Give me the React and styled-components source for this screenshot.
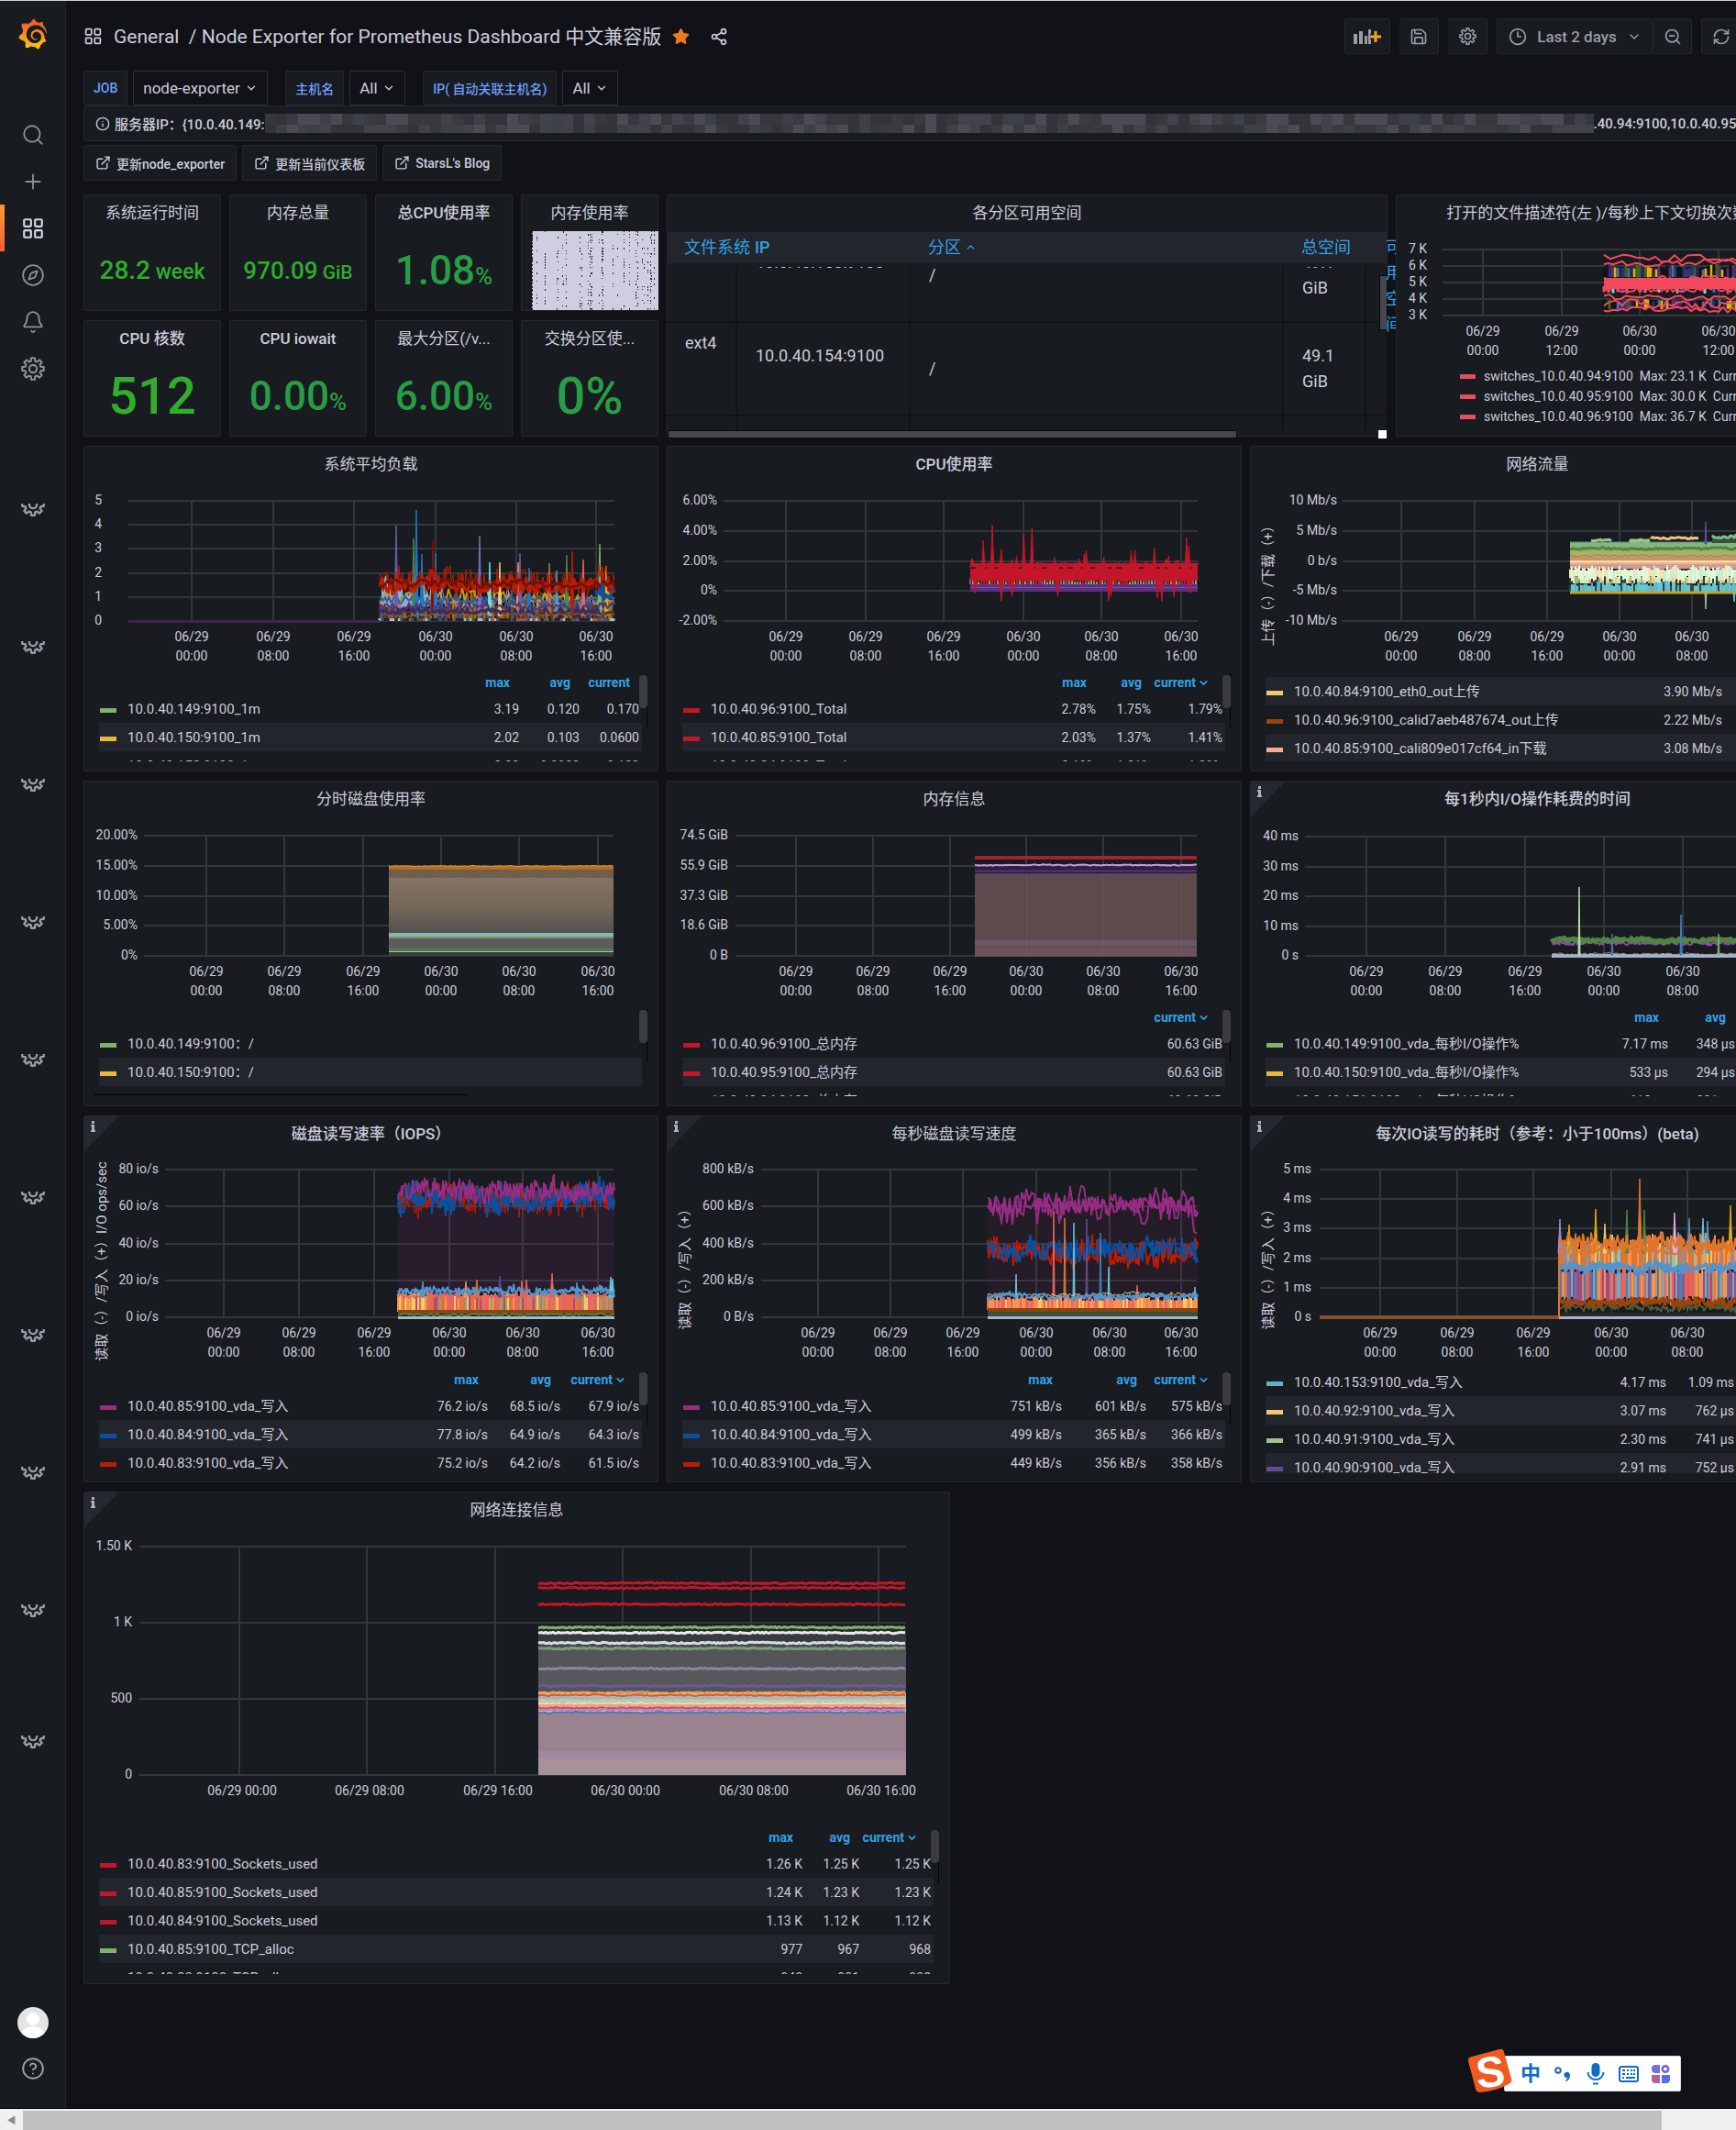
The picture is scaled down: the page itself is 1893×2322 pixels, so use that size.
import React, { useLayoutEffect, useRef } from "react";
import styled, { createGlobalStyle } from "styled-components";
import {
  Search, Plus, LayoutGrid, Compass, Bell, Share2, Save, Clock3,
  ZoomOut, RefreshCw, ChevronDown, ChevronUp, ExternalLink, Info, CircleHelp, Monitor,
} from "lucide-react";
import { SiGrafana } from "react-icons/si";
import { FaStar } from "react-icons/fa";

const FONT = `Roboto, "Noto Sans CJK SC", "Liberation Sans", sans-serif`;

const Global = createGlobalStyle`
  * { box-sizing: border-box; }
  body {
    margin: 0;
    background: #111217;
    color: #ccccdc;
    font-family: ${FONT};
    font-size: 14px;
    overflow-x: hidden;
  }
  button, select { font-family: inherit; margin: 0; }
  a { color: inherit; text-decoration: none; }
`;

/* ---------- page frame ---------- */

const Page = styled.div`
  position: relative;
  display: flex;
  flex-direction: column;
  min-height: 100vh;
  overflow: hidden;
  border-top: 1px solid #c9d3d3;
`;

const Body = styled.div`
  flex: 1;
  display: flex;
`;

const Sidebar = styled.nav`
  flex: 0 0 72px;
  display: flex;
  flex-direction: column;
  align-items: center;
  background: #181b1f;
  border-right: 1px solid #24272c;
  padding: 18px 0 30px;
`;

const LogoLink = styled.a`
  display: flex;
  height: 36px;
  margin-bottom: 66px;
  svg.mark { width: 33px; height: 36px; }
  svg.mark path { fill: url(#grafana-flame); }
`;

const NavLink = styled.a`
  width: 100%;
  height: 51px;
  display: flex;
  align-items: center;
  justify-content: center;
  border-left: 5px solid transparent;
  border-right: 5px solid transparent;
  border-image: ${(p) => (p.$active ? "linear-gradient(#ff9830, #f55f3e) 1 / 0 0 0 5px" : "none")};
  color: ${(p) => (p.$active ? "#d5d5e2" : "#8e9098")};
`;

const HalfGear = styled.a`
  display: flex;
  align-items: flex-end;
  flex: 0 0 14px;
  height: 14px;
  overflow: hidden;
  margin-top: ${(p) => p.$gap}px;
  color: #9a9ca5;
  svg { flex: none; }
`;

const SidebarFoot = styled.div`
  margin-top: auto;
  display: flex;
  flex-direction: column;
  align-items: center;
  gap: 20px;
  color: #9a9ca5;
`;

const Avatar = styled.span`
  width: 34px;
  height: 34px;
  border-radius: 50%;
  overflow: hidden;
  background: #e4e4e4;
  display: block;
`;

const Main = styled.main`
  flex: 1 0 0;
  min-width: 1937px;
  padding: 19px 19px 0;
  display: flex;
  flex-direction: column;
`;

/* ---------- top bar ---------- */

const TopBar = styled.header`
  height: 39px;
  display: flex;
  align-items: center;
  margin-bottom: 18px;
`;

const Heading = styled.h1`
  margin: 0 auto 0 0;
  display: flex;
  align-items: center;
  gap: 12px;
  font-size: 21px;
  font-weight: 400;
  line-height: 30px;
  white-space: pre;
`;

const IconButton = styled.button`
  display: flex;
  padding: 0;
  border: 0;
  background: none;
  color: ${(p) => p.$color || "#ccccdc"};
  margin-left: ${(p) => p.$gap || 0}px;
`;

const Tools = styled.div`
  display: flex;
  gap: 10px;
`;

const ToolGroup = styled.div`
  display: flex;
`;

const ToolButton = styled.button`
  height: 39px;
  width: ${(p) => p.$w}px;
  display: flex;
  align-items: center;
  justify-content: center;
  gap: 11px;
  padding: 0;
  background: #181b1f;
  border: 1px solid #25282d;
  border-radius: 2px;
  color: #9a9ca6;
  font-size: 17px;
  font-weight: 500;
  & + & { border-left-width: 0; }
`;

/* ---------- submenu ---------- */

const Variables = styled.div`
  display: flex;
  gap: 19px;
`;

const Variable = styled.div`
  display: flex;
  gap: 6px;
`;

const VarLabel = styled.label`
  height: 38px;
  padding: 0 10px;
  display: flex;
  align-items: center;
  background: #181b1f;
  border: 1px solid #24272c;
  border-radius: 2px;
  color: #6e9fff;
  font-size: 14px;
  font-weight: 500;
`;

const SelectBox = styled.span`
  position: relative;
  display: flex;
  svg { position: absolute; right: 11px; top: 12px; pointer-events: none; }
`;

const Select = styled.select`
  appearance: none;
  height: 38px;
  padding: 0 29px 0 10px;
  background: #111217;
  border: 1px solid #2c2f35;
  border-radius: 2px;
  color: #ccccdc;
  font-size: 17px;
`;

const InfoBar = styled.button`
  height: 39px;
  width: 100%;
  display: flex;
  align-items: center;
  padding: 0 12px;
  background: #181b1f;
  border: 1px solid #24272c;
  border-radius: 2px;
  color: #ccccdc;
  font-size: 15px;
  font-weight: 500;
  white-space: nowrap;
  overflow: hidden;
  margin-bottom: 4px;
  > svg:first-child { margin-right: 5px; }
  svg { flex: none; }
`;

const Links = styled.div`
  display: flex;
  gap: 6px;
  margin-bottom: 15px;
`;

const OutLink = styled.a`
  height: 39px;
  display: flex;
  align-items: center;
  gap: 6px;
  padding: 0 12px;
  background: #181b1f;
  border: 1px solid #24272c;
  border-radius: 2px;
  font-size: 14px;
  font-weight: 500;
`;

/* ---------- panels ---------- */

const Grid = styled.div`
  display: grid;
  grid-template-columns: repeat(24, minmax(0, 1fr));
  grid-template-rows: 127px 127px 355px 355px 400px 537px;
  gap: 10px 9px;
  padding-bottom: 135px;
`;

const PanelBox = styled.section`
  position: relative;
  min-width: 0;
  grid-column: span ${(p) => p.$cols};
  grid-row: span ${(p) => p.$rows || 1};
  background: #181b1f;
  box-shadow: inset 0 0 0 1px #24272c;
  border-radius: 2px;
  display: flex;
  flex-direction: column;
`;

const PanelTitle = styled.h2`
  margin: 0;
  flex: 0 0 38px;
  min-height: 0;
  text-align: center;
  font-size: 17px;
  font-weight: ${(p) => (p.$latin ? 500 : 400)};
  line-height: 40px;
  white-space: nowrap;
`;

const Corner = styled.svg`
  position: absolute;
  left: 1px;
  top: 1px;
`;

const StatBody = styled.div`
  flex: 1;
  display: flex;
  align-items: baseline;
  justify-content: center;
  align-content: center;
  flex-wrap: wrap;
  font-weight: 500;
  line-height: 1;
  color: ${(p) => p.$color};
  font-size: ${(p) => p.$size}px;
  white-space: pre;
`;

const Unit = styled.span`
  font-size: ${(p) => p.$size}px;
`;

const Block = styled.svg`
  display: block;
  width: 100%;
  height: auto;
`;

const NoiseWrap = styled.div`
  padding: 2px 0 0 12px;
`;

/* ---------- legend ---------- */

const LegendBox = styled.div`
  position: relative;
  height: ${(p) => p.$h}px;
  overflow: hidden;
  padding: 0 18px 0 17px;
`;

const LegendTable = styled.table`
  width: 100%;
  table-layout: fixed;
  border-collapse: collapse;
  white-space: nowrap;
`;

const LegendHead = styled.th`
  height: 26px;
  padding: 0 ${(p) => (p.$sorted ? 17 : 13)}px 0 0;
  text-align: right;
  color: #33a2e5;
  font-size: 14px;
  font-weight: 700;
  svg { margin: 0 0 -2px 2px; }
`;

const LegendRow = styled.tr`
  height: 31px;
  background: ${(p) => (p.$striped ? "#22252b" : "transparent")};
`;

const LegendName = styled.td`
  padding: 0 0 0 31px;
  font-size: 15px;
  line-height: 20px;
  background: linear-gradient(${(p) => p.$c}, ${(p) => p.$c}) 1px 15px / 18px 5px no-repeat;
`;

const LegendValue = styled.td`
  padding: 0 3px 0 0;
  text-align: right;
  font-size: 14px;
`;

const Thumb = styled.span`
  position: absolute;
  right: 12px;
  top: 5px;
  width: 9px;
  height: 36px;
  border-radius: 4px;
  background: #3a3c41;
`;

const Track = styled.span`
  position: absolute;
  right: 12px;
  top: 3px;
  width: 1px;
  height: 60px;
  background: #050507;
`;

const BottomTrack = styled.span`
  position: absolute;
  left: 12px;
  bottom: 0;
  width: 65%;
  height: 1px;
  background: #000;
`;

/* ---------- partition table ---------- */

const PartTable = styled.table`
  display: block;
  margin-top: 3px;
  font-size: 18px;
  line-height: 28px;
  tr {
    display: grid;
    grid-template-columns: 77px 189px 1fr 90px 23px;
  }
  thead { display: block; background: #22252b; height: 34px; overflow: hidden; }
  tbody { display: block; height: 183px; margin-top: 4px; overflow: hidden; }
`;

const PartHead = styled.th`
  padding: 3px 0 0 19px;
  text-align: left;
  color: #33a2e5;
  font-weight: ${(p) => (p.$latin ? 500 : 400)};
  white-space: nowrap;
`;

const PartCell = styled.td`
  height: 102px;
  padding: 0 0 ${(p) => p.$lift || 0}px 20px;
  display: flex;
  align-items: center;
  border-bottom: 2px solid #121418;
  border-right: 2px solid #121418;
`;

const SpillHead = styled.span`
  position: absolute;
  left: calc(100% - 2px);
  top: 44px;
  width: 11px;
  overflow: hidden;
  color: #33a2e5;
  font-size: 18px;
  line-height: 28px;
  span { display: block; width: 18px; }
`;

const VThumb = styled.span`
  position: absolute;
  right: 0;
  top: 88px;
  width: 9px;
  height: 60px;
  background: #46474e;
  border: 1px solid #0a0a0c;
`;

const HThumb = styled.span`
  position: absolute;
  left: 1px;
  bottom: -2px;
  width: 79%;
  height: 9px;
  background: #46474e;
  border: 1px solid #0a0a0c;
`;

const ScrollCorner = styled.span`
  position: absolute;
  right: 1px;
  bottom: -2px;
  width: 9px;
  height: 9px;
  background: #fff;
`;

const InlineLegend = styled.ul`
  list-style: none;
  margin: 0;
  padding: 0 0 0 70px;
  font-size: 14px;
  li {
    height: 22px;
    display: flex;
    align-items: center;
    gap: 9px;
    white-space: pre;
  }
`;

const Swatch = styled.span`
  width: 17px;
  height: 5px;
  background: ${(p) => p.$c};
`;

/* ---------- window scrollbar and input method bar ---------- */

const HScroll = styled.div`
  flex: 0 0 24px;
  display: flex;
  border-top: 1px solid #000;
  background: #f0f0f0;
`;

const ScrollArrow = styled.button`
  flex: 0 0 25px;
  padding: 0;
  border: 0;
  background: #f0f0f0;
  color: #8a8a8a;
  font-size: 10px;
`;

const ScrollThumb = styled.div`
  margin-top: 2px;
  width: 94.4%;
  background: #c1c1c1;
`;

const ScrollRest = styled.div`
  flex: 0 0 81px;
`;

const ImeBar = styled.div`
  position: absolute;
  right: 60px;
  bottom: 42px;
  height: 39px;
  width: 193px;
  display: flex;
  align-items: center;
  justify-content: space-between;
  padding: 0 9px 0 17px;
  background: #fff;
  border: 1px solid #d8dbe0;
  border-radius: 2px;
`;

const ImeLogo = styled.svg`
  position: absolute;
  left: -41px;
  top: -9px;
`;

const ImeButton = styled.button`
  display: flex;
  width: 22px;
  padding: 0;
  border: 0;
  background: none;
  color: #0f6cc0;
  font-size: 22px;
  font-weight: 700;
  line-height: 24px;
`;

/* ---------- gear drawing: eight teeth round a ring ---------- */

const GEAR = (() => {
  const pts = [];
  for (let k = 0; k < 8; k++) {
    [[-15, 8], [-9, 11], [9, 11], [15, 8]].forEach(([a, rad]) => {
      const t = ((k * 45 + a) * Math.PI) / 180;
      pts.push(`${(12 + rad * Math.sin(t)).toFixed(2)} ${(12 - rad * Math.cos(t)).toFixed(2)}`);
    });
  }
  return `M${pts.join("L")}Z`;
})();

const Gear = ({ size = 25, sw = 1.9 }) => (
  <svg width={size} height={size} viewBox="0 0 24 24" fill="none" stroke="currentColor" strokeWidth={sw} strokeLinejoin="round" aria-hidden="true">
    <path d={GEAR} />
    <circle cx="12" cy="12" r="3.8" />
  </svg>
);

/* ---------- series helpers ---------- */

function rng(seed) {
  let s = seed * 7919 + 17;
  return () => {
    s = (s * 1103515245 + 12345) % 2147483648;
    return s / 2147483648;
  };
}

function wave({ seed, x0, x1, y, amp, step = 2, up = 0, chance = 0 }) {
  const r = rng(seed);
  let d = "";
  let drift = 0;
  for (let x = x0; x <= x1; x += step) {
    drift = drift * 0.85 + (r() - 0.5) * amp * 0.5;
    let v = y + drift + (r() - 0.5) * 2 * amp;
    if (r() < chance) v -= up * r();
    d += `${d ? "L" : "M"}${x} ${v.toFixed(1)}`;
  }
  return d;
}

const Wave = ({ c, w = 2, ...p }) => (
  <path d={wave(p)} fill="none" stroke={c} strokeWidth={w} strokeLinejoin="round" />
);

function Strips({ seed, x0, x1, top, bottom, jt = 0, jb = 0, colors, step = 2, w = 2, fill = 1 }) {
  const r = rng(seed);
  const paths = colors.map(() => "");
  for (let x = x0; x < x1; x += step) {
    const i = Math.floor(r() * colors.length);
    const a = top + (r() - 0.5) * 2 * jt;
    const b = bottom + (r() - 0.5) * 2 * jb;
    if (r() <= fill) paths[i] += `M${x} ${a.toFixed(1)}V${b.toFixed(1)}`;
  }
  return paths.map((d, i) => <path key={i} d={d} stroke={colors[i]} strokeWidth={w} fill="none" />);
}

const Spikes = ({ list, base, w = 2 }) =>
  list.map(([x, y, c], i) => (
    <path key={i} d={`M${x - w} ${base}L${x} ${y}L${x + w} ${base}Z`} fill={c} stroke={c} strokeWidth="1" />
  ));

const Band = ({ x0, x1, y0, y1, c, o = 1 }) => (
  <rect x={x0} y={y0} width={x1 - x0} height={y1 - y0} fill={c} opacity={o} />
);

const DAYS = [
  ["06/29", "00:00"], ["06/29", "08:00"], ["06/29", "16:00"],
  ["06/30", "00:00"], ["06/30", "08:00"], ["06/30", "16:00"],
];

function Chart({ width = 627, end, y0, y1, labels, labelX, gx0, gx1 = 579, ticks, days = DAYS, oneLine, axis, axisY, children }) {
  const n = labels.length - 1;
  const ys = labels.map((_, i) => Math.round(y0 + ((y1 - y0) * i) / n));
  return (
    <Block viewBox={`0 38 ${width} ${end - 38}`} role="img">
      <g fill="#b4becd" opacity="0.17">
        {ys.map((y) => <rect key={y} x={gx0} y={y - 1} width={gx1 - gx0} height="2" />)}
        {ticks.map((x) => <rect key={x} x={x - 1} y={y0} width="2" height={y1 - y0} />)}
      </g>
      {children}
      <g fill="#ccccdc" fontSize="14" fontFamily={FONT}>
        {labels.map((t, i) => <text key={t} x={labelX} y={ys[i] + 4} textAnchor="end">{t}</text>)}
        {ticks.map((x, i) =>
          oneLine ? (
            <text key={x} x={x + 3} y={y1 + 22} textAnchor="middle">{days[i].join(" ")}</text>
          ) : (
            <React.Fragment key={x}>
              <text x={x} y={y1 + 22} textAnchor="middle">{days[i][0]}</text>
              <text x={x} y={y1 + 43} textAnchor="middle">{days[i][1]}</text>
            </React.Fragment>
          )
        )}
        {axis && (
          <text transform={`translate(25 ${axisY}) rotate(-90)`} textAnchor="middle" fontSize="15">{axis}</text>
        )}
      </g>
    </Block>
  );
}

function Legend({ h, heads, cols, rows, sorted, stripe = 1, scroll, under }) {
  return (
    <LegendBox $h={h}>
      <LegendTable>
        <colgroup>
          <col />
          {cols.map((w, i) => <col key={i} style={{ width: w }} />)}
        </colgroup>
        {heads && (
          <thead>
            <tr>
              <LegendHead aria-label="series" />
              {heads.map((t, i) => {
                const last = sorted && i === heads.length - 1;
                return (
                  <LegendHead key={i} $sorted={last}>
                    {t}{last && <ChevronDown size={13} strokeWidth={3} />}
                  </LegendHead>
                );
              })}
            </tr>
          </thead>
        )}
        <tbody>
          {rows.map(([c, name, ...vals], i) => (
            <LegendRow key={name} $striped={i % 2 === stripe}>
              <LegendName $c={c}>{name}</LegendName>
              {vals.map((v, j) => <LegendValue key={j}>{v}</LegendValue>)}
            </LegendRow>
          ))}
        </tbody>
      </LegendTable>
      {scroll && <><Track /><Thumb /></>}
      {under && <BottomTrack />}
    </LegendBox>
  );
}

function Panel({ title, cols, rows, info, children }) {
  return (
    <PanelBox $cols={cols} $rows={rows}>
      {info && (
        <Corner width="37" height="38" viewBox="0 0 37 38" aria-hidden="true">
          <path d="M0 0H37L0 38Z" fill="#25282e" />
          <path d="M8 5h3v3H8zM7 9h4v6h1v2H7v-2h1v-4H7z" fill="#b0b1bd" />
        </Corner>
      )}
      <PanelTitle $latin={/[A-Z]|beta/.test(title)}>{title}</PanelTitle>
      {children}
    </PanelBox>
  );
}

function Stat({ title, value, unit, size, unitSize, color = "#299c46" }) {
  return (
    <Panel title={title} cols={2}>
      <StatBody $size={size} $color={color}>
        <span>{value}{unit && <Unit $size={unitSize}>{unit}</Unit>}</span>
      </StatBody>
    </Panel>
  );
}

function NoisePanel() {
  const r = rng(5);
  let d = "";
  for (let i = 0; i < 34; i++) {
    const x = Math.floor(r() * 137);
    const dense = r();
    for (let y = 0; y < 86; y += 3) if (r() < dense * 0.6) d += `M${x} ${y}h1v${1 + Math.floor(r() * 2)}h-1z`;
  }
  for (let y = 0; y < 86; y += 4) d += `M0 ${y}h1v2h-1z`;
  return (
    <Panel title="内存使用率" cols={2}>
      <NoiseWrap>
        <Block viewBox="0 0 138 86" role="img">
          <rect width="138" height="86" fill="#cfcde0" />
          <path d={d} fill="#2a2b33" />
        </Block>
      </NoiseWrap>
    </Panel>
  );
}

function Mosaic() {
  const tones = ["#3a3b41", "#42434a", "#33343a", "#4a4b53", "#3e4048", "#37383d"];
  const r = rng(11);
  const cells = [];
  for (let x = 0; x < 1451; x += 12) {
    cells.push(<rect key={x} x={x} y="0" width="12" height="12" fill={tones[Math.floor(r() * 6)]} />);
    cells.push(<rect key={`b${x}`} x={x} y="12" width="12" height="9" fill={tones[Math.floor(r() * 6)]} />);
  }
  return <svg width="1449" height="21" aria-hidden="true">{cells}</svg>;
}

function Partitions() {
  const body = useRef(null);
  useLayoutEffect(() => { body.current.scrollTop = 41; }, []);
  return (
    <Panel title="各分区可用空间" cols={10} rows={2}>
      <PartTable>
        <thead>
          <tr>
            <PartHead>文件系统</PartHead>
            <PartHead $latin>IP</PartHead>
            <PartHead>分区 <ChevronUp size={13} strokeWidth={2.6} /></PartHead>
            <PartHead>总空间</PartHead>
            <PartHead aria-label="可用空间" />
          </tr>
        </thead>
        <tbody ref={body}>
          {[["", "10.0.40.153:9100"], ["ext4", "10.0.40.154:9100"]].map(([fs, ip]) => (
            <tr key={ip}>
              <PartCell $lift={56}>{fs}</PartCell>
              <PartCell $lift={28}>{ip}</PartCell>
              <PartCell>/</PartCell>
              <PartCell>49.1<br />GiB</PartCell>
              <PartCell />
            </tr>
          ))}
          <tr><PartCell /><PartCell /><PartCell /><PartCell /><PartCell /></tr>
        </tbody>
      </PartTable>
      <VThumb /><HThumb /><ScrollCorner />
      <SpillHead aria-hidden="true"><span>可</span><span>用</span><span>空</span><span>间</span></SpillHead>
    </Panel>
  );
}

function Switches() {
  const x = { x0: 227, x1: 440 };
  const mix = ["#e0b400", "#1f3a7a", "#111217", "#4b6f9e", "#5f2a78", "#111217", "#37672d", "#111217", "#3a2050"];
  return (
    <Panel title="打开的文件描述符(左 )/每秒上下文切换次数(右)" cols={6} rows={2}>
      <Chart width={468} end={187} y0={60} y1={132} labels={["7 K", "6 K", "5 K", "4 K", "3 K"]} labelX={34}
        gx0={51} gx1={440} ticks={[95, 181, 266, 352]}
        days={[["06/29", "00:00"], ["06/29", "12:00"], ["06/30", "00:00"], ["06/30", "12:00"]]}>
        <Strips seed={2} {...x} top={79} bottom={90} jt={3} colors={mix} step={3} w={3} />
        <Strips seed={3} {...x} top={116} bottom={124} jt={2} jb={2} colors={mix} step={3} w={3} />
        <Strips seed={4} {...x} top={100} bottom={107} jb={2} colors={["#70dbed", "#1f78c1", "#f2495c"]} step={5} w={3} fill={0.6} />
        <Band {...x} y0={91} y1={103} c="#f2495c" />
        <Wave seed={5} {...x} y={69} amp={4} step={7} c="#f2495c" />
        <Wave seed={6} {...x} y={75} amp={3} step={5} c="#f2495c" />
        <Wave seed={7} {...x} y={92} amp={3} step={3} c="#f2495c" />
        <Wave seed={8} {...x} y={103} amp={3} step={3} c="#f2495c" />
        <Wave seed={9} {...x} y={112} amp={3} step={6} c="#f2495c" />
        <Wave seed={10} {...x} y={119} amp={4} step={4} c="#f2495c" />
        <Wave seed={12} {...x} y={125} amp={3} step={5} c="#f2495c" />
      </Chart>
      <InlineLegend>
        {[["94", "23.1"], ["95", "30.0"], ["96", "36.7"]].map(([ip, v]) => (
          <li key={ip}><Swatch $c="#e24d5f" />{`switches_10.0.40.${ip}:9100  Max: ${v} K  Current: 5.2 K`}</li>
        ))}
      </InlineLegend>
    </Panel>
  );
}

function Load() {
  const x = { x0: 323, x1: 579 };
  return (
    <Panel title="系统平均负载" cols={8}>
      <Chart end={245} y0={60} y1={191} labels={["5", "4", "3", "2", "1", "0"]} labelX={20} gx0={49}
        ticks={[118, 207, 295, 384, 472, 559]}>
        <Strips seed={21} {...x} top={168} bottom={190} jt={12} colors={["#4a2f73", "#58140c", "#967302", "#2f5f94", "#6a3a18", "#8f3b2a", "#3f2b5b"]} />
        <path d={`${wave({ seed: 22, x0: 325, x1: 384, y: 154, amp: 14 })}V175H325Z`} fill="#82b5d8" />
        <Wave seed={23} {...x} y={166} amp={9} step={3} w={2} c="#c99a14" />
        <Wave seed={33} {...x} y={172} amp={7} step={3} w={1} c="#6a9c86" />
        <Wave seed={24} {...x} y={172} amp={5} up={25} chance={0.06} c="#c58ad0" w={1} />
        <Wave seed={25} {...x} y={168} amp={5} c="#2f5fa0" />
        <Spikes base={185} list={[
          [341, 87, "#705da0"], [360, 101, "#508642"], [363, 70, "#1f78c1"], [369, 118, "#1f78c1"], [381, 102, "#890f02"],
          [384, 117, "#1f78c1"], [432, 98, "#806eb7"], [443, 127, "#70dbed"], [454, 127, "#f2c96d"], [474, 127, "#f9934e"],
          [476, 117, "#705da0"], [486, 133, "#1f78c1"], [508, 128, "#ba6f43"], [516, 136, "#5195ce"], [527, 119, "#508642"],
          [533, 115, "#bf1b00"], [545, 124, "#ea6460"], [563, 107, "#7eb26d"], [570, 131, "#e5ac0e"],
        ]} />
        <Wave seed={26} {...x} y={148} amp={13} up={18} chance={0.08} step={1} w={1} c="#bf1b00" />
        <Wave seed={34} {...x} y={152} amp={8} c="#bf1b00" w={3} />
        <Wave seed={27} {...x} y={150} amp={4} step={4} c="#7a1008" w={3} />
        <Wave seed={28} x0={558} x1={579} y={159} amp={8} c="#0a50a1" w={3} />
        <Wave seed={29} {...x} y={175} amp={4} c="#4b3a78" w={2} />
        <Wave seed={30} {...x} y={181} amp={3} c="#3f2b5b" w={3} />
        <Wave seed={31} {...x} y={184} amp={2} c="#967302" w={1} />
        <Strips seed={32} {...x} top={188} bottom={191} colors={["#b8b8b8", "#8f5a5a", "#1f2430", "#3a5866", "#1f2430"]} step={3} w={3} />
        <Band x0={49} x1={323} y0={190} y1={193} c="#3f2450" />
      </Chart>
      <Legend h={99} heads={["max", "avg", "current"]} cols={[80, 66, 65]} scroll rows={[
        ["#7eb26d", "10.0.40.149:9100_1m", "3.19", "0.120", "0.170"],
        ["#eab839", "10.0.40.150:9100_1m", "2.02", "0.103", "0.0600"],
        ["transparent", "10.0.40.152:9100_1m", "2.33", "0.0932", "0.130"],
      ]} />
    </Panel>
  );
}

function Cpu() {
  const x = { x0: 331, x1: 579 };
  const red = "#c4162a";
  const up = [[863, 328], [887, 278], [911, 355], [940, 390], [952, 377], [971, 308], [993, 285], [1053, 382], [1118, 388], [1133, 370], [1138, 360], [1185, 382], [1258, 360], [1268, 357], [1320, 353], [1358, 378], [1406, 318], [1412, 345]];
  const down = [[841, 500], [911, 527], [940, 510], [1062, 512], [1198, 525], [1204, 510], [1328, 515], [1340, 527], [1372, 512], [1416, 500]];
  return (
    <Panel title="CPU使用率" cols={8}>
      <Chart end={245} y0={60} y1={191} labels={["6.00%", "4.00%", "2.00%", "0%", "-2.00%"]} labelX={55} gx0={62}
        ticks={[130, 217, 302, 389, 474, 561]}>
        <Band {...x} y0={150} y1={159} c="#5b2f80" />
        <Band {...x} y0={154} y1={155} c="#7f4ca5" />
        <Strips seed={41} {...x} top={146} bottom={151} jt={2} colors={["#7eb26d", "#8f8f5c", "#705da0", "#c4162a"]} step={3} />
        <Band {...x} y0={128} y1={147} c={red} />
        <Wave seed={42} {...x} y={131} amp={3} up={6} chance={0.1} c={red} />
        <Wave seed={43} {...x} y={145} amp={3} c={red} />
        <path d="M331 133H579" stroke="#5a0f1c" strokeWidth="2" strokeDasharray="6 9 3 7 5 14 4 5" />
        <path d="M331 129H579" stroke={red} strokeWidth="2" />
        <Spikes base={140} w={2} list={up.map(([a, b]) => [a / 2.45 - 7, b / 3 - 6, red])} />
        <Spikes base={145} w={2} list={down.map(([a, b]) => [a / 2.45 - 7, b / 3 - 6, red])} />
      </Chart>
      <Legend h={99} heads={["max", "avg", "current"]} cols={[90, 60, 78]} sorted scroll rows={[
        ["#c4162a", "10.0.40.96:9100_Total", "2.78%", "1.75%", "1.79%"],
        ["#c4162a", "10.0.40.85:9100_Total", "2.03%", "1.37%", "1.41%"],
        ["transparent", "10.0.40.84:9100_Total", "2.18%", "1.31%", "1.38%"],
      ]} />
    </Panel>
  );
}

function Network() {
  const x = { x0: 349, x1: 579 };
  return (
    <Panel title="网络流量" cols={8}>
      <Chart end={252} y0={60} y1={191} labels={["10 Mb/s", "5 Mb/s", "0 b/s", "-5 Mb/s", "-10 Mb/s"]} labelX={95} gx0={101}
        ticks={[165, 245, 324, 403, 482, 561]} axis="上传（-）/下载（+）" axisY={149}>
        <Band {...x} y0={105} y1={122} c="#86b67c" />
        <path d="M349 105H579" stroke="#4a8f8c" strokeWidth="1" />
        <Wave seed={51} x0={372} x1={394} y={103} amp={1} c="#9ac48a" w={3} />
        <Wave seed={52} x0={414} x1={437} y={103} amp={1} c="#9ac48a" w={4} />
        <Wave seed={53} x0={437} x1={490} y={101} amp={1} c="#f2c07a" w={3} />
        <Band x0={504} x1={579} y0={100} y1={106} c="#37513a" />
        <Wave seed={54} x0={504} x1={579} y={99} amp={2} c="#7fc08d" w={3} />
        <Wave seed={55} {...x} y={112} amp={1} c="#508642" w={3} />
        <Band {...x} y0={115} y1={121} c="#b3ae5e" />
        <Wave seed={56} {...x} y={120} amp={1} c="#7d8b7a" w={1} />
        <Band {...x} y0={121} y1={125} c="#cf9062" />
        <Band {...x} y0={125} y1={127} c="#f5dfa8" />
        <Band {...x} y0={127} y1={129} c="#f2b58a" />
        <Band {...x} y0={129} y1={134} c="#cf9a94" />
        <Strips seed={60} {...x} top={143} bottom={150} colors={["#2c3b33", "#a9b875", "#cdeccd", "#f2c96d"]} />
        <Strips seed={57} {...x} top={133} bottom={145} jt={3} jb={3} colors={["#e0f9d7", "#f9e2b0", "#cdeccd", "#e6f3d8"]} />
        <Strips seed={59} {...x} top={150} bottom={159} jt={3} colors={["#65c5db", "#5fc4b8", "#64b0c8", "#65c5db", "#65c5db", "#5fc4b8", "#2c4b43"]} />
        <path d="M349 160H579" stroke="#c9a227" strokeWidth="3" />
        <Spikes base={107} w={1} list={[[497, 83, "#614d93"]]} />
        <Spikes base={160} w={1} list={[[497, 178, "#9ac48a"], [528, 170, "#65c5db"]]} />
      </Chart>
      <Legend h={92} cols={[110, 50, 41]} stripe={0} rows={[
        ["#f2c96d", "10.0.40.84:9100_eth0_out上传", "3.90 Mb/s", "", ""],
        ["#99440a", "10.0.40.96:9100_calid7aeb487674_out上传", "2.22 Mb/s", "", ""],
        ["#f2b090", "10.0.40.85:9100_cali809e017cf64_in下载", "3.08 Mb/s", "", ""],
      ]} />
    </Panel>
  );
}

function Disk() {
  const x = { x0: 333, x1: 578 };
  return (
    <Panel title="分时磁盘使用率" cols={8}>
      <Chart end={245} y0={60} y1={191} labels={["20.00%", "15.00%", "10.00%", "5.00%", "0%"]} labelX={59} gx0={66} gx1={578}
        ticks={[134, 219, 305, 390, 475, 561]}>
        <defs>
          <linearGradient id="disk-fill" x1="0" y1="0" x2="0" y2="1">
            <stop offset="0" stopColor="#857160" /><stop offset="0.5" stopColor="#76685c" /><stop offset="1" stopColor="#54504e" />
          </linearGradient>
        </defs>
        <Band {...x} y0={95} y1={108} c="#6f5d4d" />
        <Band {...x} y0={108} y1={166} c="url(#disk-fill)" />
        <Wave seed={61} {...x} y={107} amp={0.4} c="#80766f" w={2} />
        <Band {...x} y0={93} y1={97} c="#b96b20" />
        <Wave seed={62} {...x} y={93} amp={0.5} c="#dba030" w={1} />
        <Band {...x} y0={166} y1={170} c="#8bb5b5" />
        <Band {...x} y0={170} y1={172} c="#6f9a6b" />
        <Band {...x} y0={172} y1={183} c="#5f5c5b" />
        <Band {...x} y0={183} y1={186} c="#527a52" />
        <Band {...x} y0={186} y1={187} c="#a4c0b0" />
        <Band {...x} y0={187} y1={191} c="#3a3e41" />
      </Chart>
      <Legend h={98} heads={["", "", ""]} cols={[10, 10, 10]} scroll under rows={[
        ["#7eb26d", "10.0.40.149:9100：/", "", "", ""],
        ["#eab839", "10.0.40.150:9100：/", "", "", ""],
      ]} />
    </Panel>
  );
}

function Memory() {
  const x = { x0: 336, x1: 578 };
  return (
    <Panel title="内存信息" cols={8}>
      <Chart end={245} y0={60} y1={191} labels={["74.5 GiB", "55.9 GiB", "37.3 GiB", "18.6 GiB", "0 B"]} labelX={67} gx0={75} gx1={578}
        ticks={[141, 225, 309, 392, 476, 561]}>
        <Band {...x} y0={82} y1={86} c="#a91f36" />
        <Band {...x} y0={91} y1={102} c="#2f2145" />
        <Wave seed={71} {...x} y={92} amp={0.5} c="#c79ad8" w={2} />
        <Band {...x} y0={98} y1={99} c="#6b3f8a" />
        <Band {...x} y0={102} y1={192} c="#5c4a4d" />
        <Band {...x} y0={101} y1={102} c="#4f3a66" />
        <Band {...x} y0={174} y1={180} c="#6e5766" />
        <Band {...x} y0={180} y1={182} c="#5f4c58" />
        <Band {...x} y0={182} y1={192} c="#6a5359" />
        <g fill="#b4becd" opacity="0.08"><rect x="392" y="102" width="1" height="90" /><rect x="476" y="102" width="1" height="90" /><rect x="561" y="102" width="1" height="90" /></g>
      </Chart>
      <Legend h={99} heads={["current"]} cols={[90]} sorted scroll rows={[
        ["#c4162a", "10.0.40.96:9100_总内存", "60.63 GiB"],
        ["#c4162a", "10.0.40.95:9100_总内存", "60.63 GiB"],
        ["transparent", "10.0.40.94:9100_总内存", "60.63 GiB"],
      ]} />
    </Panel>
  );
}

function IoTime() {
  const x = { x0: 329, x1: 579 };
  return (
    <Panel title="每1秒内I/O操作耗费的时间" cols={8} info>
      <Chart end={245} y0={61} y1={191} labels={["40 ms", "30 ms", "20 ms", "10 ms", "0 s"]} labelX={53} gx0={60}
        ticks={[127, 213, 300, 386, 472, 558]}>
        <Wave seed={81} {...x} y={177} amp={2} step={1} c="#8f4aa8" />
        <Wave seed={82} {...x} y={174} amp={2} step={1} c="#508642" w={4} />
        <Band {...x} y0={189} y1={193} c="#9fb4cc" />
        <Wave seed={83} {...x} y={189} amp={1} up={3} chance={0.04} c="#b08f94" w={1} />
        <Spikes base={190} w={1} list={[[359, 116, "#b7dbab"], [470, 146, "#447ebc"], [511, 167, "#7eb26d"], [395, 167, "#5a6f9c"]]} />
      </Chart>
      <Legend h={99} heads={["max", "avg", "current"]} cols={[100, 73, 77]} rows={[
        ["#7eb26d", "10.0.40.149:9100_vda_每秒I/O操作%", "7.17 ms", "348 µs", "352 µs"],
        ["#eab839", "10.0.40.150:9100_vda_每秒I/O操作%", "533 µs", "294 µs", "290 µs"],
        ["transparent", "10.0.40.151:9100_vda_每秒I/O操作%", "612 µs", "301 µs", "298 µs"],
      ]} />
    </Panel>
  );
}

const WARM = ["#ea6460", "#f9934e", "#f2c96d", "#ea6460", "#e0752d", "#ea6460", "#7eb26d", "#a8506a", "#d97a60"];
const WRITES = [["#962d82", "85"], ["#0a50a1", "84"], ["#bf1b00", "83"]];

function Iops() {
  const x = { x0: 343, x1: 579 };
  const v = [["76.2", "68.5", "67.9"], ["77.8", "64.9", "64.3"], ["75.2", "64.2", "61.5"]];
  return (
    <Panel title="磁盘读写速率（IOPS）" cols={8} info>
      <Chart end={275} y0={59} y1={220} labels={["80 io/s", "60 io/s", "40 io/s", "20 io/s", "0 io/s"]} labelX={82} gx0={89} gx1={578}
        ticks={[153, 235, 317, 399, 479, 561]} axis="读取（-）/写入（+）I/O ops/sec" axisY={159}>
        <Band {...x} y0={85} y1={192} c="#962d82" o={0.13} />
        <Wave seed={91} {...x} y={91} amp={15} step={1} w={1} c="#bf1b00" />
        <Wave seed={191} {...x} y={91} amp={10} c="#bf1b00" />
        <Wave seed={92} {...x} y={90} amp={14} up={16} chance={0.03} c="#0a50a1" step={1} />
        <Wave seed={93} {...x} y={82} amp={11} c="#962d82" step={1} />
        <Strips seed={94} {...x} top={195} bottom={214} jt={2} colors={WARM} />
        <Wave seed={95} {...x} y={196} amp={3} c="#ea6460" />
        <Spikes base={198} list={[[417, 181, "#f9934e"], [429, 179, "#e0752d"], [454, 175, "#614d93"], [478, 180, "#ea6460"], [483, 179, "#ea6460"], [511, 172, "#ea6460"], [370, 181, "#5195ce"], [538, 182, "#5195ce"], [575, 176, "#65c5db"], [577, 178, "#65c5db"]]} />
        <Wave seed={96} {...x} y={191} amp={4} up={5} chance={0.05} step={1} c="#5195ce" w={2} />
        <Band {...x} y0={212} y1={216} c="#8a4512" />
        <Wave seed={97} {...x} y={217} amp={1} c="#508642" />
        <Band {...x} y0={219} y1={222} c="#a8b6cc" />
      </Chart>
      <Legend h={115} heads={["max", "avg", "current"]} cols={[100, 79, 86]} sorted scroll
        rows={WRITES.map(([c, ip], i) => [c, `10.0.40.${ip}:9100_vda_写入`, ...v[i].map((s) => `${s} io/s`)])} />
    </Panel>
  );
}

function DiskSpeed() {
  const x = { x0: 350, x1: 579 };
  const v = [["751", "601", "575"], ["499", "365", "366"], ["449", "356", "358"]];
  return (
    <Panel title="每秒磁盘读写速度" cols={8} info>
      <Chart end={275} y0={59} y1={220} labels={["800 kB/s", "600 kB/s", "400 kB/s", "200 kB/s", "0 B/s"]} labelX={95} gx0={103} gx1={578}
        ticks={[165, 244, 323, 403, 483, 561]} axis="读取（-）/写入（+）" axisY={164}>
        <Band {...x} y0={98} y1={195} c="#962d82" o={0.1} />
        <Wave seed={101} {...x} y={149} amp={13} step={1} c="#bf1b00" />
        <Wave seed={102} {...x} y={146} amp={11} step={1} c="#0a50a1" />
        <Wave seed={103} {...x} y={101} amp={20} step={3} up={12} chance={0.04} c="#962d82" />
        <Wave seed={104} {...x} y={98} amp={10} step={1} c="#962d82" />
        <Strips seed={105} {...x} top={199} bottom={212} jt={3} colors={["#f9934e", "#ea6460", "#f2c96d", "#e97f60", "#f9934e"]} />
        <Spikes base={200} w={1} list={[[381, 173, "#65c5db"], [422, 104, "#ea6460"], [434, 112, "#e0752d"], [444, 117, "#65c5db"], [458, 113, "#614d93"], [473, 128, "#447ebc"], [482, 165, "#65c5db"], [513, 185, "#ea6460"], [576, 187, "#65c5db"]]} />
        <Wave seed={106} {...x} y={195} amp={2} c="#f2c96d" w={1} />
        <Wave seed={107} {...x} y={197} amp={3} step={1} c="#5195ce" w={2} />
        <Band {...x} y0={210} y1={214} c="#8a4512" />
        <Band {...x} y0={214} y1={219} c="#39513a" />
        <Band {...x} y0={219} y1={222} c="#a8b6cc" />
      </Chart>
      <Legend h={115} heads={["max", "avg", "current"]} cols={[100, 92, 83]} sorted scroll
        rows={WRITES.map(([c, ip], i) => [c, `10.0.40.${ip}:9100_vda_写入`, ...v[i].map((s) => `${s} kB/s`)])} />
    </Panel>
  );
}

function IoLatency() {
  const x = { x0: 337, x1: 579 };
  return (
    <Panel title="每次IO读写的耗时（参考：小于100ms）(beta)" cols={8} info>
      <Chart end={275} y0={59} y1={220} labels={["5 ms", "4 ms", "3 ms", "2 ms", "1 ms", "0 s"]} labelX={67} gx0={76}
        ticks={[142, 226, 309, 394, 477, 560]} axis="读取（-）/写入（+）" axisY={164}>
        <Band x0={76} x1={337} y0={218} y1={222} c="#85502b" />
        <Strips seed={111} {...x} top={137} bottom={168} jt={10} colors={["#e0752d", "#f9934e", "#7fc8c0", "#e0752d", "#f2c96d", "#e0752d", "#8a8fa8"]} />
        <Strips seed={112} {...x} top={168} bottom={202} jt={5} jb={5} colors={["#ea6460", "#e0605c", "#f9934e", "#4a7fb0", "#9c4a88", "#ea6460", "#c98a5a", "#64b0c8"]} />
        <Spikes base={150} list={[[338, 113, "#9a8bd0"], [348, 119, "#e5ac0e"], [377, 102, "#e5ac0e"], [387, 118, "#f2c96d"], [411, 103, "#508642"], [425, 69, "#e0752d"], [430, 103, "#508642"], [463, 106, "#e5a8e2"], [479, 112, "#5195ce"], [494, 112, "#65c5db"], [499, 115, "#5195ce"], [524, 98, "#e5ac0e"]]} />
        <Wave seed={113} {...x} y={139} amp={9} step={1} c="#e0752d" w={2} />
        <Wave seed={114} {...x} y={146} amp={6} c="#e0752d" w={2} />
        <Wave seed={115} {...x} y={166} amp={5} step={1} c="#5195ce" w={3} />
        <Wave seed={117} {...x} y={209} amp={4} step={1} c="#4e5b3a" />
        <Wave seed={116} {...x} y={204} amp={4} step={1} c="#99440a" w={3} />
        <Band {...x} y0={215} y1={219} c="#222a2a" />
        <Band {...x} y0={219} y1={222} c="#a8b6cc" />
        <path d="M337 220V150" stroke="#e0752d" strokeWidth="2" />
      </Chart>
      <Legend h={115} cols={[100, 74, 78]} rows={[
        ["#64b0c8", "10.0.40.153:9100_vda_写入", "4.17 ms", "1.09 ms", ""],
        ["#f2c96d", "10.0.40.92:9100_vda_写入", "3.07 ms", "762 µs", ""],
        ["#9ac48a", "10.0.40.91:9100_vda_写入", "2.30 ms", "741 µs", ""],
        ["#614d93", "10.0.40.90:9100_vda_写入", "2.91 ms", "752 µs", ""],
      ]} />
    </Panel>
  );
}

function Connections() {
  const x = { x0: 496, x1: 897 };
  const bands = [
    [148, 154, "#262b2b"], [154, 166, "#363c3c"], [166, 172, "#454c4b"], [172, 193, "#545556"], [193, 212, "#58575a"],
    [212, 220, "#55535f"], [220, 241, "#c9b7a8"], [241, 283, "#98838f"], [283, 291, "#a388a0"], [291, 309, "#a8929a"],
  ];
  const lines = [
    [100, "#c4162a"], [105, "#b01a2c"], [123, "#c4162a"], [148, "#7eb26d"], [154, "#ece6ee"], [165, "#d6dbe6"], [171, "#7f9c76"],
    [193, "#8d83a5"], [212, "#6c5a94"], [219, "#f0a94e"], [222, "#e0532d"], [225, "#8cc0c4"], [228, "#b7cfc0"], [231, "#f0dcae"],
    [233, "#f2a36a"], [236, "#c4468a"], [238, "#c67fae"], [241, "#4a78b8"],
  ];
  return (
    <Panel title="网络连接信息" cols={12} info>
      <Chart width={945} end={364} y0={60} y1={309} labels={["1.50 K", "1 K", "500", "0"]} labelX={53} gx0={61} gx1={897}
        ticks={[170, 309, 449, 588, 728, 867]} oneLine>
        {bands.map(([a, b, c]) => <Band key={a} {...x} y0={a} y1={b} c={c} />)}
        {lines.map(([y, c], i) => <Wave key={y} seed={120 + i} {...x} y={y} amp={0.7} step={2} c={c} w={y < 213 ? 3 : 2} />)}
      </Chart>
      <Legend h={162} heads={["max", "avg", "current"]} cols={[90, 62, 78]} sorted scroll rows={[
        ["#c4162a", "10.0.40.83:9100_Sockets_used", "1.26 K", "1.25 K", "1.25 K"],
        ["#c4162a", "10.0.40.85:9100_Sockets_used", "1.24 K", "1.23 K", "1.23 K"],
        ["#c4162a", "10.0.40.84:9100_Sockets_used", "1.13 K", "1.12 K", "1.12 K"],
        ["#7eb26d", "10.0.40.85:9100_TCP_alloc", "977", "967", "968"],
        ["transparent", "10.0.40.83:9100_TCP_alloc", "943", "931", "932"],
      ]} />
    </Panel>
  );
}

function Side() {
  const nav = [[Search, "搜索"], [Plus, "创建"], [LayoutGrid, "仪表板"], [Compass, "探索"], [Bell, "告警"], [Gear, "配置"]];
  const gaps = [122, 136, 136, 136, 136, 136, 136, 136, 136, 129];
  return (
    <Sidebar>
      <svg width="0" height="0" aria-hidden="true">
        <defs>
          <linearGradient id="grafana-flame" x1="0" y1="1" x2="0" y2="0">
            <stop offset="0" stopColor="#fcc718" /><stop offset="0.5" stopColor="#f68d1e" /><stop offset="1" stopColor="#ef4e28" />
          </linearGradient>
        </defs>
      </svg>
      <LogoLink href="#" aria-label="Grafana"><SiGrafana className="mark" /></LogoLink>
      {nav.map(([Icon, label], i) => (
        <NavLink key={label} href="#" aria-label={label} $active={i === 2}><Icon size={26} strokeWidth={i === 2 ? 2 : 1.7} /></NavLink>
      ))}
      {gaps.map((g, i) => (
        <HalfGear key={i} href="#" aria-label="设置" $gap={g}><Gear size={26} sw={2.2} /></HalfGear>
      ))}
      <SidebarFoot>
        <Avatar>
          <svg width="34" height="34" viewBox="0 0 34 34" aria-hidden="true">
            <circle cx="17" cy="13" r="7" fill="#fff" /><ellipse cx="17" cy="31" rx="13" ry="10" fill="#fff" />
          </svg>
        </Avatar>
        <CircleHelp size={26} strokeWidth={1.8} />
      </SidebarFoot>
    </Sidebar>
  );
}

function Top() {
  return (
    <TopBar>
      <Heading>
        <LayoutGrid size={21} strokeWidth={2} />
        <span><a href="#">General</a>  / <a href="#">Node Exporter for Prometheus Dashboard 中文兼容版</a></span>
        <IconButton aria-label="收藏" $color="#eb7b18"><FaStar size={19} /></IconButton>
        <IconButton aria-label="分享" $gap={10}><Share2 size={20} /></IconButton>
      </Heading>
      <Tools>
        <ToolButton $w={50} aria-label="添加面板">
          <svg width="30" height="18" viewBox="0 0 30 18" aria-hidden="true">
            <path d="M0 6h4v11H0zM6 3h4v14H6zM12 8h3v9h-3zM16 1h3v16h-3z" fill="#9a9ca6" />
            <path d="M24 3v12M18 9h12" stroke="#181b1f" strokeWidth="6" />
            <path d="M24 3v12M18 9h12" stroke="#f2a12e" strokeWidth="3" />
          </svg>
        </ToolButton>
        <ToolButton $w={43} aria-label="保存"><Save size={20} /></ToolButton>
        <ToolButton $w={43} aria-label="设置"><Gear size={19} sw={2} /></ToolButton>
        <ToolGroup>
          <ToolButton $w={171}><Clock3 size={20} />Last 2 days <ChevronDown size={16} /></ToolButton>
          <ToolButton $w={42} aria-label="缩小"><ZoomOut size={20} /></ToolButton>
        </ToolGroup>
        <ToolGroup>
          <ToolButton $w={43} aria-label="刷新"><RefreshCw size={20} /></ToolButton>
          <ToolButton $w={39} aria-label="间隔"><ChevronDown size={16} /></ToolButton>
        </ToolGroup>
        <ToolButton $w={43} aria-label="视图"><Monitor size={20} /></ToolButton>
      </Tools>
    </TopBar>
  );
}

function Filters() {
  const vars = [["job", "JOB", "node-exporter"], ["host", "主机名", "All"], ["ip", "IP( 自动关联主机名)", "All"]];
  return (
    <Variables>
      {vars.map(([id, label, value]) => (
        <Variable key={id}>
          <VarLabel htmlFor={id}>{label}</VarLabel>
          <SelectBox>
            <Select id={id} defaultValue={value}><option>{value}</option></Select>
            <ChevronDown size={14} strokeWidth={2.4} />
          </SelectBox>
        </Variable>
      ))}
    </Variables>
  );
}

function Ime() {
  return (
    <ImeBar>
      <ImeLogo width="50" height="50" viewBox="0 0 50 50" aria-hidden="true">
        <path d="M5 9L35 1Q39 0 40 4L48 33Q49 37 45 39Q30 47 14 48Q10 48 9 44L1 14Q0 10 5 9Z" fill="#f05a22" />
        <text x="25" y="42" transform="rotate(-6 25 25)" textAnchor="middle" fontFamily="Liberation Sans, sans-serif" fontWeight="700" fontSize="47" fill="#fff">S</text>
      </ImeLogo>
      <ImeButton aria-label="中文">中</ImeButton>
      <ImeButton aria-label="标点">
        <svg width="20" height="22" viewBox="0 0 20 22"><circle cx="5" cy="7" r="2.8" fill="none" stroke="currentColor" strokeWidth="2" /><path d="M14 9a3 3 0 0 1 4 3c0 4-2 6-4 7l-1-1c1-1 2-2 2-3a3 3 0 0 1-1-6z" fill="currentColor" /></svg>
      </ImeButton>
      <ImeButton aria-label="语音">
        <svg width="20" height="24" viewBox="0 0 20 24"><rect x="5.500" y="0" width="9" height="15" rx="4.500" fill="currentColor" /><path d="M1.500 10a8.500 8 0 0 0 17 0M7 22.500h6" fill="none" stroke="currentColor" strokeWidth="2" /></svg>
      </ImeButton>
      <ImeButton aria-label="键盘">
        <svg width="22" height="18" viewBox="0 0 22 18"><rect x="1" y="1" width="20" height="16" rx="2" fill="none" stroke="currentColor" strokeWidth="2" /><path d="M4 5h3M9 5h2M13 5h2M16 5h2M4 9h3M9 9h2M13 9h2M16 9h2M4 13h2M8 13h10" stroke="currentColor" strokeWidth="2" /></svg>
      </ImeButton>
      <ImeButton aria-label="工具箱">
        <svg width="20" height="20" viewBox="0 0 20 20"><path d="M4 0h5v9H4a4 4 0 0 1-4-4.500A4 4 0 0 1 4 0z" fill="#7b6be0" /><circle cx="15" cy="4.500" r="3.200" fill="none" stroke="#6f63dd" strokeWidth="2.600" /><path d="M0 11h9v9H4a4 4 0 0 1-4-4z" fill="#b0629c" /><path d="M11 11h9v5a4 4 0 0 1-4 4h-5z" fill="#5a6be6" /></svg>
      </ImeButton>
    </ImeBar>
  );
}

export default function App() {
  return (
    <>
      <Global />
      <Page>
        <Body>
          <Side />
          <Main>
            <Top />
            <Filters />
            <InfoBar>
              <Info size={16} />服务器IP：{"{10.0.40.149:"}<Mosaic />.40.94:9100,10.0.40.95:9100,10.0.40.96:9100
            </InfoBar>
            <Links>
              {["更新node_exporter", "更新当前仪表板", "StarsL's Blog"].map((t) => (
                <OutLink key={t} href="#"><ExternalLink size={17} />{t}</OutLink>
              ))}
            </Links>
            <Grid>
              <Stat title="系统运行时间" value="28.2" unit=" week" size={28} unitSize={23} color="#32ac2d" />
              <Stat title="内存总量" value="970.09" unit=" GiB" size={26} unitSize={21} color="#32ac2d" />
              <Stat title="总CPU使用率" value="1.08" unit="%" size={44} unitSize={26} />
              <NoisePanel />
              <Partitions />
              <Switches />
              <Stat title="CPU 核数" value="512" size={56} color="#32ac2d" />
              <Stat title="CPU iowait" value="0.00" unit="%" size={44} unitSize={26} />
              <Stat title="最大分区(/v..." value="6.00" unit="%" size={44} unitSize={26} />
              <Stat title="交换分区使..." value="0%" size={56} />
              <Load />
              <Cpu />
              <Network />
              <Disk />
              <Memory />
              <IoTime />
              <Iops />
              <DiskSpeed />
              <IoLatency />
              <Connections />
            </Grid>
          </Main>
        </Body>
        <HScroll>
          <ScrollArrow aria-label="向左滚动">◀</ScrollArrow>
          <ScrollThumb />
          <ScrollRest />
        </HScroll>
        <Ime />
      </Page>
    </>
  );
}
